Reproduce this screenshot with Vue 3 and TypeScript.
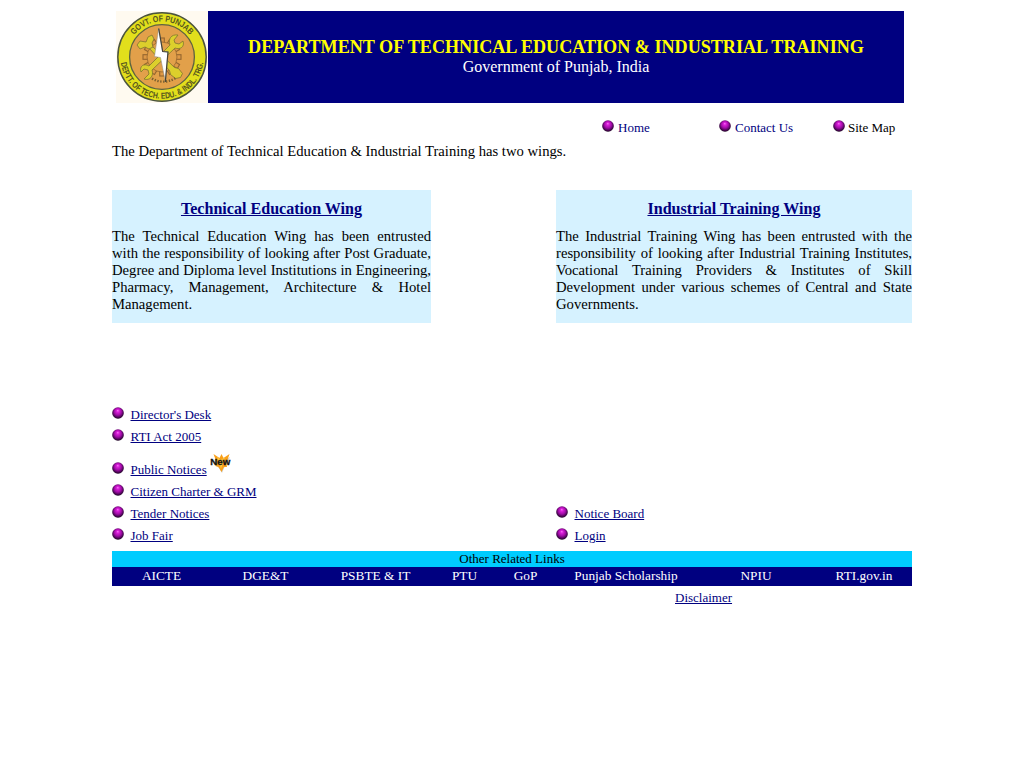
<script setup lang="ts">
interface Wing { title: string; text: string; cls: string }
interface Item { label: string; fresh?: boolean }

const nav = [
  { label: 'Home', cls: 'home' },
  { label: 'Contact Us', cls: 'contact' },
  { label: 'Site Map', cls: 'sitemap' },
]
const wings: Wing[] = [
  {
    title: 'Technical Education Wing',
    cls: 'tech',
    text: 'The Technical Education Wing has been entrusted with the responsibility of looking after Post Graduate, Degree and Diploma level Institutions in Engineering, Pharmacy, Management, Architecture & Hotel Management.',
  },
  {
    title: 'Industrial Training Wing',
    cls: 'industrial',
    text: 'The Industrial Training Wing has been entrusted with the responsibility of looking after Industrial Training Institutes, Vocational Training Providers & Institutes of Skill Development under various schemes of Central and State Governments.',
  },
]
const left: Item[] = [
  { label: "Director's Desk" },
  { label: 'RTI Act 2005' },
  { label: 'Public Notices', fresh: true },
  { label: 'Citizen Charter & GRM' },
  { label: 'Tender Notices' },
  { label: 'Job Fair' },
]
const right: Item[] = [{ label: 'Notice Board' }, { label: 'Login' }]
const related = ['AICTE', 'DGE&T', 'PSBTE & IT', 'PTU', 'GoP', 'Punjab Scholarship', 'NPIU', 'RTI.gov.in']
const teeth = Array.from({ length: 12 }, (_, i) => i * 30)
</script>

<template>
  <svg class="defs" width="0" height="0">
    <defs>
      <radialGradient id="ball" cx="0.5" cy="0.45" r="0.56" fx="0.48" fy="0.28">
        <stop offset="0" stop-color="#f878f8" />
        <stop offset="0.2" stop-color="#dc20dc" />
        <stop offset="0.55" stop-color="#a00ca6" />
        <stop offset="0.8" stop-color="#50065a" />
        <stop offset="1" stop-color="#140018" />
      </radialGradient>
    </defs>
  </svg>
  <main class="page">
    <header class="banner">
      <svg class="seal" width="92" height="92" viewBox="0 0 92 92">
        <defs>
          <path id="arc-top" d="M10.5 46A35.5 35.5 0 0 1 81.5 46" />
          <path id="arc-bottom" d="M4.6 42A41.6 41.6 0 1 0 87.4 42" />
        </defs>
        <rect width="92" height="92" fill="#fffaf0" />
        <circle cx="46" cy="46" r="44.2" fill="#e2df1c" stroke="#4c553c" stroke-width="1.5" />
        <circle cx="46" cy="46" r="32.4" fill="#e2a04a" stroke="#5d6340" stroke-width="1.3" />
        <g stroke="#94662f" stroke-width="1.1">
          <rect v-for="a in teeth" :key="a" x="43.7" y="27" width="4.6" height="6" fill="#df9946" :transform="`rotate(${a} 46 46)`" />
          <circle cx="46" cy="46" r="15" fill="#e2a04a" stroke-width="0.8" />
        </g>
        <g stroke="#7d7530" stroke-width="0.8" fill="#dccf2c" stroke-linejoin="round">
          <path d="M33 37l2.5-2.5 23 22 4 1 4 5-2 4-5 1-5-4-1-4z" />
          <path d="M21 34l3-4 6 1 2-5 4-2 2 4-2 4 1 4-4 2-4-2-5 2z" />
          <path d="M62 24l-4 5 1 3 4 1 4-3c2 6-3 9-8 7L36 59c2 6-2 11-8 9l5-5-1-4-4-1-3 3c-2-6 3-9 8-6L54 34c-2-6 1-11 8-10z" />
        </g>
        <path d="M42.7 17.5L46.5 40.5L52 41L49.5 71L44.5 46.5L38.5 45.5Z" fill="#fff" stroke="#8a8a86" stroke-width="0.5" />
        <path d="M42.7 17.5L46.7 40.5L52 41L49.3 71" fill="none" stroke="#424238" stroke-width="1.2" />
        <path d="M36 67.5q11 6.5 24-.5" fill="none" stroke="#7a6030" stroke-width="2.4" stroke-dasharray="1.4 1.5" />
        <text class="seal-text"><textPath href="#arc-top" startOffset="50%" text-anchor="middle" textLength="64" lengthAdjust="spacingAndGlyphs">GOVT. OF PUNJAB</textPath></text>
        <text class="seal-text"><textPath href="#arc-bottom" startOffset="50%" text-anchor="middle" textLength="119" lengthAdjust="spacingAndGlyphs">DEPTT. OF TECH. EDU. &amp; INDL. TRG.</textPath></text>
      </svg>
      <div class="banner-text">
        <h1>DEPARTMENT OF TECHNICAL EDUCATION &amp; INDUSTRIAL TRAINING</h1>
        <p>Government of Punjab, India</p>
      </div>
    </header>

    <nav class="nav">
      <a v-for="n in nav" :key="n.label" :class="n.cls">
        <svg class="ball" width="12" height="12" viewBox="0 0 12 12"><circle cx="6" cy="6" r="5.8" fill="url(#ball)" /></svg>
        <span>{{ n.label }}</span>
      </a>
    </nav>

    <p class="intro">The Department of Technical Education &amp; Industrial Training has two wings.</p>

    <section class="wings">
      <article v-for="w in wings" :key="w.title" :class="['wing', w.cls]">
        <h2><a>{{ w.title }}</a></h2>
        <p>{{ w.text }}</p>
      </article>
    </section>

    <section class="links">
      <ul v-for="(list, i) in [left, right]" :key="i">
        <li v-for="l in list" :key="l.label" :class="{ fresh: l.fresh }">
          <svg class="ball" width="12" height="12" viewBox="0 0 12 12"><circle cx="6" cy="6" r="5.8" fill="url(#ball)" /></svg>
          <a>{{ l.label }}</a>
          <svg v-if="l.fresh" class="new" width="22" height="21" viewBox="0 0 22 21">
            <path d="M6 3l5 4 2-3 2 3 5-3-3 7-3 4-2 5-3-5-4-3z" fill="#888" opacity="0.4" />
            <path d="M3.5 1l6 4 2-4 2 4 6-4-3 9 .5 4-3 0-2.500 5-3-5-3-1 1-4z" fill="#f9a01a" />
            <path d="M7 4l4 3 4-3-2 6-2 6-2-6z" fill="#ffc640" />
            <text x="0.3" y="12" textLength="20" lengthAdjust="spacingAndGlyphs">New</text>
          </svg>
        </li>
      </ul>
    </section>

    <footer>
      <div class="related-title">Other Related Links</div>
      <div class="related"><a v-for="r in related" :key="r">{{ r }}</a></div>
      <div class="legal"><a>Disclaimer</a></div>
    </footer>
  </main>
</template>

<style>
body { background: #fff; }
</style>

<style scoped>
.defs { display: block; }
.page {
  width: 800px;
  margin: 0 auto;
  padding-top: 11px;
  font-family: "Liberation Serif", "Times New Roman", serif;
  font-size: 13px;
  color: #000;
}
h1, h2, p, ul { margin: 0; padding: 0; font-weight: normal; }
svg { display: block; flex: none; }
.banner { display: flex; width: 788px; height: 92px; margin-left: 4px; }
.banner-text { flex: 1; background: #000080; text-align: center; padding-top: 26px; }
.banner-text h1 { font-size: 18.13px; line-height: 21px; font-weight: bold; color: #ff0; white-space: nowrap; }
.banner-text p { font-size: 16px; line-height: 18px; color: #fff; }
.seal-text { font: bold 8.6px "Liberation Sans", Arial, sans-serif; fill: #55551e; }
.nav { display: flex; padding: 17px 0 0 490px; height: 15px; line-height: 15px; color: #000080; }
.nav a { display: flex; }
.nav .ball { margin-right: 4px; }
.home { width: 117px; }
.contact { width: 114px; }
.sitemap { color: #000; }
.sitemap .ball { margin-right: 3px; }
.intro { margin-top: 8px; font-size: 14.667px; line-height: 17px; }
.wings { display: flex; justify-content: space-between; margin-top: 30px; }
.wing { height: 133px; background: #d6f2ff; }
.wing.tech { width: 319px; }
.wing.industrial { width: 356px; }
.wing h2 { padding-top: 10px; text-align: center; font-size: 16.08px; line-height: 18px; font-weight: bold; color: #000080; text-decoration: underline; }
.wing p { margin-top: 10px; font-size: 14.667px; line-height: 17px; text-align: justify; }
.links { display: grid; grid-template-columns: 444px 1fr; align-items: end; margin-top: 81px; }
.links ul { list-style: none; }
.links li { display: flex; height: 22px; line-height: 22px; color: #000080; }
.links li .ball { margin: 3px 6.5px 0 0; }
.links li a, .legal a { text-decoration: underline; }
.links .fresh { height: 33px; line-height: 44px; }
.links .fresh .ball { margin-top: 14px; }
.links .fresh .new { margin: 5px 0 0 3px; }
.new text { font: bold 9px "Liberation Sans", Arial, sans-serif; fill: #111; stroke: #111; stroke-width: 0.3px; }
.related-title { margin-top: 4px; height: 16px; line-height: 16px; background: #0cf; text-align: center; }
.related { display: grid; grid-template-columns: 99px 109px 111px 67px 55px 146px 114px 99px; height: 19px; line-height: 18px; background: #000080; color: #fff; font-size: 13.333px; text-align: center; }
.related a:last-child { padding-left: 3px; }
.legal { padding-left: 563px; line-height: 24px; color: #000080; }
</style>
